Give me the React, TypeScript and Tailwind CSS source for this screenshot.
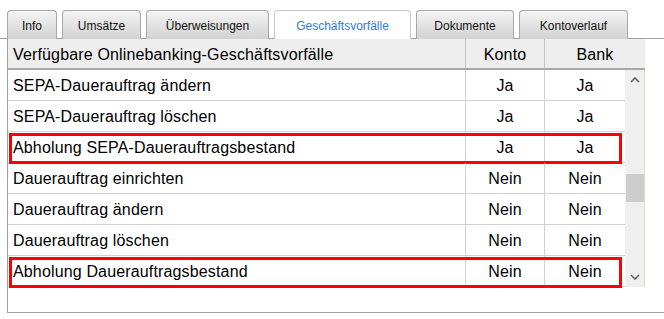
import React from "react";

const tabs = [
  { label: "Info", w: 50 },
  { label: "Umsätze", w: 79 },
  { label: "Überweisungen", w: 123 },
  { label: "Geschäftsvorfälle", w: 137, active: true },
  { label: "Dokumente", w: 98 },
  { label: "Kontoverlauf", w: 109 },
];

const rows = [
  { name: "SEPA-Dauerauftrag ändern", k: "Ja", b: "Ja" },
  { name: "SEPA-Dauerauftrag löschen", k: "Ja", b: "Ja" },
  { name: "Abholung SEPA-Dauerauftragsbestand", k: "Ja", b: "Ja", hl: true },
  { name: "Dauerauftrag einrichten", k: "Nein", b: "Nein" },
  { name: "Dauerauftrag ändern", k: "Nein", b: "Nein" },
  { name: "Dauerauftrag löschen", k: "Nein", b: "Nein" },
  { name: "Abholung Dauerauftragsbestand", k: "Nein", b: "Nein", hl: true },
];

export default function App() {
  return (
    <div
      className="w-[664px] h-[319px] bg-white overflow-hidden text-black"
      style={{ fontFamily: "Tahoma, 'Liberation Sans', Arial, sans-serif" }}
    >
      <div className="flex items-end h-[39px] pt-[10px]">
        <div className="w-[7px] h-full border-b border-[#a0a0a0]" />
        {tabs.map((t, i) => (
          <React.Fragment key={t.label}>
            {i > 0 && <div className="w-[5px] h-full border-b border-[#a0a0a0]" />}
            <div
              className={
                "h-full flex items-center justify-center text-[12px] pt-[1px] rounded-t-[4px] border border-b-0 " +
                (t.active
                  ? "bg-white border-[#c8c8c8] text-[#2f7be0]"
                  : "bg-gradient-to-b from-[#f4f4f4] to-[#d2d2d2] border-[#a8a8a8] border-b text-[#111]")
              }
              style={{ width: t.w }}
            >
              {t.label}
            </div>
          </React.Fragment>
        ))}
        <div className="flex-1 h-full border-b border-[#a0a0a0]" />
      </div>
      <div className="ml-[7px] w-[657px] h-[274px] border-l border-b border-[#a0a0a0] flex flex-col">
        <div className="flex w-[637px] h-[31px] bg-[#eeeeee] border-b-2 border-[#a8a8a8] text-[16px] tracking-[0.15px]">
          <div className="w-[458px] flex items-center pl-[5px] pt-[2px] border-r border-[#c4c4c4]">
            Verfügbare Onlinebanking-Geschäftsvorfälle
          </div>
          <div className="w-[79px] flex items-center justify-center pt-[2px] border-r border-[#c4c4c4]">Konto</div>
          <div className="flex-1 flex items-center justify-center pt-[2px]">Bank</div>
        </div>
        <div className="flex">
          <div className="w-[617px] flex flex-col">
            {rows.map((r) => (
              <div key={r.name} className="relative flex h-[31px] border-b border-[#d2d2d2] text-[16px] tracking-[0.15px]">
                <div className="w-[458px] flex items-center pl-[5px] pt-[2px] border-r border-[#d2d2d2]">{r.name}</div>
                <div className="w-[79px] flex items-center justify-center pt-[2px] border-r border-[#d2d2d2]">{r.k}</div>
                <div className="flex-1 flex items-center justify-center pt-[2px]">{r.b}</div>
                {r.hl && (
                  <div className="absolute left-[1px] right-[3px] top-[1px] bottom-[-2px] border-[3px] border-[#ff0000]" />
                )}
              </div>
            ))}
          </div>
          <div className="w-[20px] h-[217px] bg-[#efefef] border-r border-[#dcdcd0] flex flex-col items-center">
            <div className="h-[20px] flex items-center justify-center">
              <svg width="10" height="6" viewBox="0 0 10 6">
                <path d="M1 5 L5 1 L9 5" stroke="#606060" strokeWidth="1.6" fill="none" />
              </svg>
            </div>
            <div className="h-[84px]" />
            <div className="w-[18px] h-[28px] bg-[#cdcdcd]" />
            <div className="flex-1" />
            <div className="h-[20px] flex items-center justify-center">
              <svg width="10" height="6" viewBox="0 0 10 6">
                <path d="M1 1 L5 5 L9 1" stroke="#606060" strokeWidth="1.6" fill="none" />
              </svg>
            </div>
          </div>
        </div>
      </div>
    </div>
  );
}
